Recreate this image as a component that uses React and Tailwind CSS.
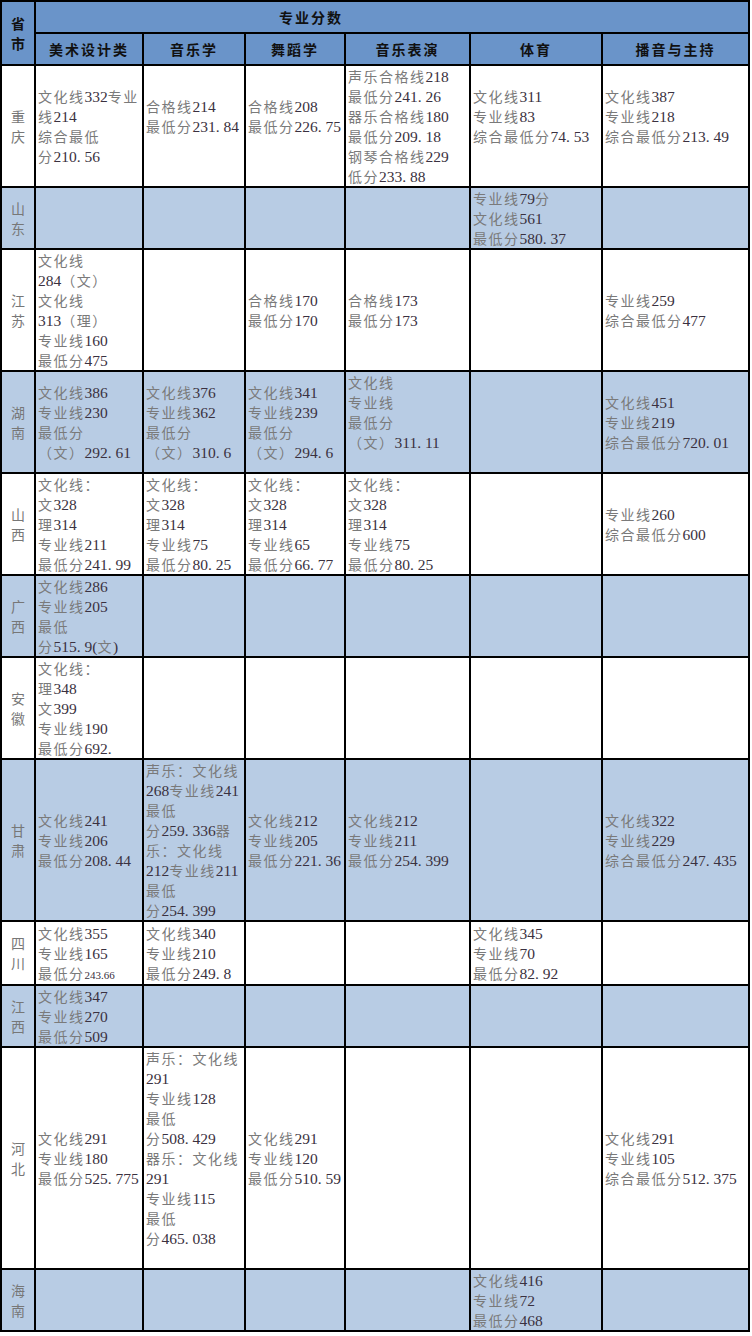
import React from "react";

const WHITE = "bg-white";
const BLUE = "bg-[#b8cce4]";

const rows = [
  {
    p: "重庆",
    bg: WHITE,
    cells: [
      ["文化线332专业", "线214", "综合最低", "分210.56"],
      ["合格线214", "最低分231.84", ""],
      ["合格线208", "最低分226.75", ""],
      ["声乐合格线218", "最低分241.26", "器乐合格线180", "最低分209.18", "钢琴合格线229", "低分233.88"],
      ["文化线311", "专业线83", "综合最低分74.53", ""],
      ["文化线387", "专业线218", "综合最低分213.49", ""],
    ],
  },
  {
    p: "山东",
    bg: BLUE,
    cells: [[], [], [], [], ["专业线79分", "文化线561", "最低分580.37"], []],
  },
  {
    p: "江苏",
    bg: WHITE,
    cells: [
      ["文化线", "284（文）", "文化线", "313（理）", "专业线160", "最低分475"],
      [],
      ["合格线170", "最低分170"],
      ["合格线173", "最低分173"],
      [],
      ["专业线259", "综合最低分477"],
    ],
  },
  {
    p: "湖南",
    bg: BLUE,
    cells: [
      ["文化线386", "专业线230", "最低分", "（文）292.61"],
      ["文化线376", "专业线362", "最低分", "（文）310.6"],
      ["文化线341", "专业线239", "最低分", "（文）294.6"],
      ["文化线", "专业线", "最低分", "（文）311.11", ""],
      [],
      ["文化线451", "专业线219", "综合最低分720.01"],
    ],
  },
  {
    p: "山西",
    bg: WHITE,
    cells: [
      ["文化线：", "文328", "理314", "专业线211", "最低分241.99"],
      ["文化线：", "文328", "理314", "专业线75", "最低分80.25"],
      ["文化线：", "文328", "理314", "专业线65", "最低分66.77"],
      ["文化线：", "文328", "理314", "专业线75", "最低分80.25"],
      [],
      ["专业线260", "综合最低分600"],
    ],
  },
  {
    p: "广西",
    bg: BLUE,
    cells: [["文化线286", "专业线205", "最低", "分515.9(文)"], [], [], [], [], []],
  },
  {
    p: "安徽",
    bg: WHITE,
    cells: [["文化线：", "理348", "文399", "专业线190", "最低分692."], [], [], [], [], []],
  },
  {
    p: "甘肃",
    bg: BLUE,
    cells: [
      ["文化线241", "专业线206", "最低分208.44"],
      ["声乐：文化线", "268专业线241", "最低", "分259.336器", "乐：文化线", "212专业线211", "最低", "分254.399"],
      ["文化线212", "专业线205", "最低分221.36"],
      ["文化线212", "专业线211", "最低分254.399"],
      [],
      ["文化线322", "专业线229", "综合最低分247.435"],
    ],
  },
  {
    p: "四川",
    bg: WHITE,
    cells: [
      ["文化线355", "专业线165", ["最低分", { small: "243.66" }]],
      ["文化线340", "专业线210", "最低分249.8"],
      [],
      [],
      ["文化线345", "专业线70", "最低分82.92"],
      [],
    ],
  },
  {
    p: "江西",
    bg: BLUE,
    cells: [["文化线347", "专业线270", "最低分509"], [], [], [], [], []],
  },
  {
    p: "河北",
    bg: WHITE,
    cells: [
      ["文化线291", "专业线180", "最低分525.775"],
      ["声乐：文化线", "291", "专业线128", "最低", "分508.429", "器乐：文化线", "291", "专业线115", "最低", "分465.038", ""],
      ["文化线291", "专业线120", "最低分510.59"],
      [],
      [],
      ["文化线291", "专业线105", "综合最低分512.375"],
    ],
  },
  {
    p: "海南",
    bg: BLUE,
    cells: [[], [], [], [], ["文化线416", "专业线72", "最低分468"], []],
  },
];

const heads = ["美术设计类", "音乐学", "舞蹈学", "音乐表演", "体育", "播音与主持"];

function Ascii({ s }) {
  const parts = s.split(/(\.)/).filter((x) => x !== "");
  return parts.map((p, i) =>
    p === "." ? (
      <span key={i} className="inline-block w-[7.75px] text-left">
        .
      </span>
    ) : (
      <React.Fragment key={i}>{p}</React.Fragment>
    )
  );
}

function Runs({ s }) {
  const parts = s.match(/[\x00-\x7F]+|[^\x00-\x7F]+/g) || [];
  return parts.map((p, i) =>
    /^[\x00-\x7F]/.test(p) ? (
      <span key={i} className="font-['Liberation_Serif',serif] text-[15.5px] text-[#3a3140]">
        <Ascii s={p} />
      </span>
    ) : (
      <span key={i} className="font-['Noto_Sans_CJK_SC',sans-serif] text-[14px] tracking-[1.5px] text-[#7a7a7a]">
        {p}
      </span>
    )
  );
}

function Line({ line }) {
  const segs = Array.isArray(line) ? line : [line];
  return (
    <div className="h-[20px] leading-[20px] whitespace-nowrap">
      {segs.map((seg, i) =>
        typeof seg === "string" ? (
          <Runs key={i} s={seg} />
        ) : (
          <span key={i} className="font-['Liberation_Serif',serif] text-[11px] text-[#3a3140]">
            {seg.small}
          </span>
        )
      )}
    </div>
  );
}

function Cell({ lines, bg }) {
  return (
    <div className={`${bg} flex flex-col justify-center pl-[2px] overflow-hidden`}>
      {lines.map((l, i) => (
        <Line key={i} line={l} />
      ))}
    </div>
  );
}

export default function App() {
  return (
    <div className="w-[752px] min-h-[1336px] bg-white">
      <div className="w-[750px] bg-black p-[2px] grid gap-[2px] grid-cols-[32px_106px_100px_98px_123px_130px_145px] grid-rows-[30px_30px_120px_60px_120px_100px_100px_80px_100px_160px_62px_60px_220px_60px]">
        <div className="row-span-2 bg-[#6a94c9] flex flex-col items-center justify-center font-['Noto_Sans_CJK_SC',sans-serif] font-bold text-[14px] text-[#111] leading-[20px]">
          <div>省</div>
          <div>市</div>
        </div>
        <div className="col-span-6 bg-[#6a94c9] flex items-center pl-[243px] font-['Noto_Sans_CJK_SC',sans-serif] font-bold text-[14px] tracking-[2px] text-[#111]">
          专业分数
        </div>
        {heads.map((h) => (
          <div
            key={h}
            className="bg-[#6a94c9] flex items-center justify-center font-['Noto_Sans_CJK_SC',sans-serif] font-bold text-[14px] tracking-[2px] text-[#111]"
          >
            {h}
          </div>
        ))}
        {rows.map((r) => (
          <React.Fragment key={r.p}>
            <div
              className={`${r.bg} flex flex-col items-center justify-center font-['Noto_Sans_CJK_SC',sans-serif] text-[14px] leading-[20px] text-[#777]`}
            >
              <div>{r.p[0]}</div>
              <div>{r.p[1]}</div>
            </div>
            {r.cells.map((c, i) => (
              <Cell key={i} lines={c} bg={r.bg} />
            ))}
          </React.Fragment>
        ))}
      </div>
    </div>
  );
}
